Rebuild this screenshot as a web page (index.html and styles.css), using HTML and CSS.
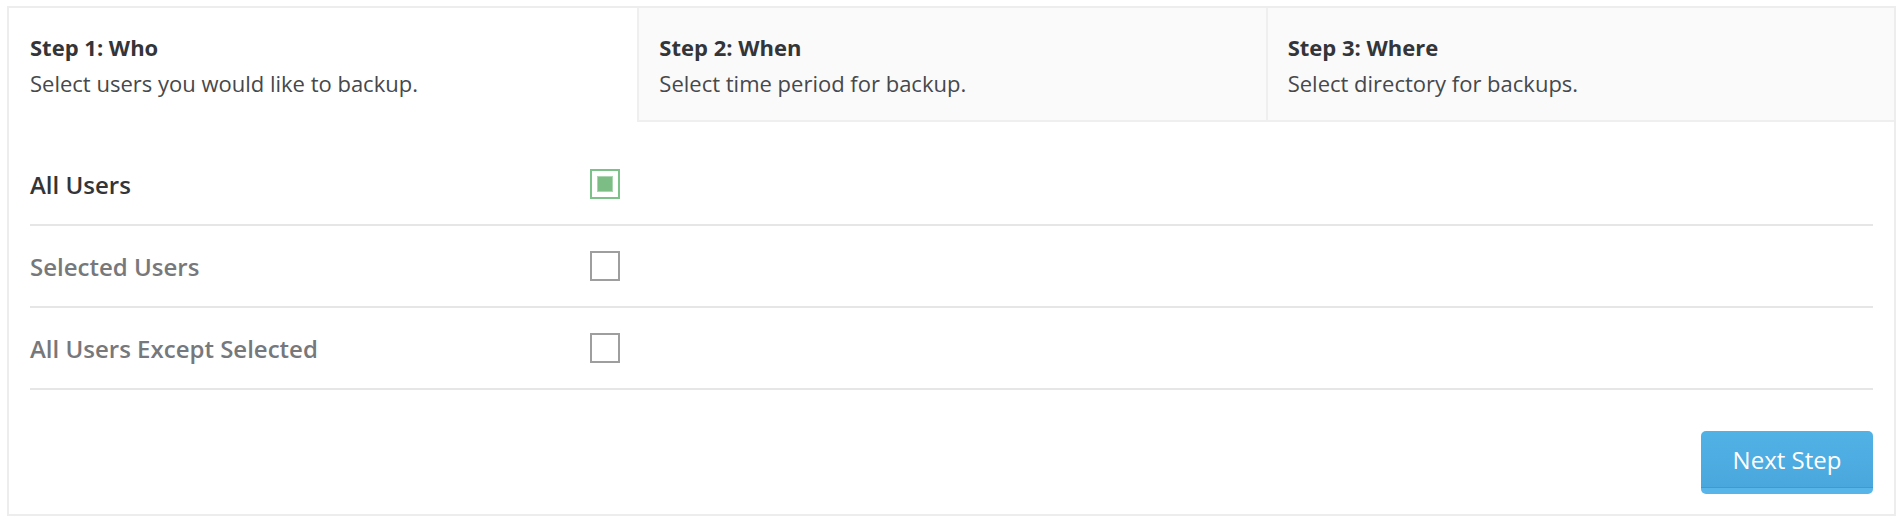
FILE: index.html
```html
<!DOCTYPE html>
<html lang="en">
<head>
<meta charset="utf-8">
<title>Backup Wizard</title>
<link rel="stylesheet" href="styles.css">
</head>
<body>
<div class="wizard">
  <div class="tabs">
    <div class="tab active">
      <div class="tab-title">Step 1: Who</div>
      <div class="tab-desc">Select users you would like to backup.</div>
    </div>
    <div class="tab">
      <div class="tab-title">Step 2: When</div>
      <div class="tab-desc">Select time period for backup.</div>
    </div>
    <div class="tab">
      <div class="tab-title">Step 3: Where</div>
      <div class="tab-desc">Select directory for backups.</div>
    </div>
  </div>
  <div class="content">
    <div class="option selected">
      <span class="option-label">All Users</span>
      <span class="check checked"><span class="check-fill"></span></span>
    </div>
    <div class="option">
      <span class="option-label">Selected Users</span>
      <span class="check"></span>
    </div>
    <div class="option">
      <span class="option-label">All Users Except Selected</span>
      <span class="check"></span>
    </div>
    <div class="footer">
      <button class="btn-next">Next Step</button>
    </div>
  </div>
</div>
</body>
</html>
```

FILE: styles.css
```css
body {
  margin: 6px 4px 0 7px;
  font-family: "Open Sans", "Noto Sans", sans-serif;
  background: #fff;
}
.wizard {
  border: 2px solid #ededed;
  background: #fff;
}
.tabs {
  display: grid;
  grid-template-columns: 1fr 1fr 1fr;
}
.tab {
  box-sizing: border-box;
  height: 114px;
  padding: 25px 20px 0;
  background: #fafafa;
  border-left: 2px solid #efefef;
  border-bottom: 2px solid #efefef;
}
.tab.active {
  background: #fff;
  border-left: none;
  border-bottom: none;
  padding-left: 21px;
}
.tab-title {
  font-size: 22px;
  font-weight: 700;
  color: #333538;
  line-height: 28px;
}
.tab-desc {
  margin-top: 8px;
  font-size: 22px;
  color: #46484b;
  line-height: 28px;
}
.content {
  padding: 22px 21px 20px 21px;
}
.option {
  display: grid;
  grid-template-columns: 560px 30px;
  align-items: center;
  height: 80px;
  border-bottom: 2px solid #e6e6e6;
}
.option-label {
  font-size: 24px;
  font-weight: 600;
  color: #77787b;
}
.option.selected .option-label {
  color: #333538;
}
.check {
  box-sizing: border-box;
  width: 30px;
  height: 30px;
  border: 2px solid #9e9e9e;
  display: flex;
  align-items: center;
  justify-content: center;
}
.check.checked {
  border-color: #7cc08a;
}
.check-fill {
  width: 16px;
  height: 16px;
  box-sizing: border-box;
  background: #7cbd86;
  border: 1px solid #a9d6b1;
}
.footer {
  display: flex;
  justify-content: flex-end;
  margin-top: 41px;
}
.btn-next {
  box-sizing: border-box;
  width: 172px;
  height: 63px;
  border: none;
  border-bottom: 6px solid #58b5ea;
  border-radius: 5px;
  background: linear-gradient(#51b2e6, #4aa7dd);
  box-shadow: inset 0 -1px 0 #3f9ad0;
  color: #fff;
  font-family: "Open Sans", "Noto Sans", sans-serif;
  font-size: 24px;
  font-weight: 400;
  padding: 0;
}
```
